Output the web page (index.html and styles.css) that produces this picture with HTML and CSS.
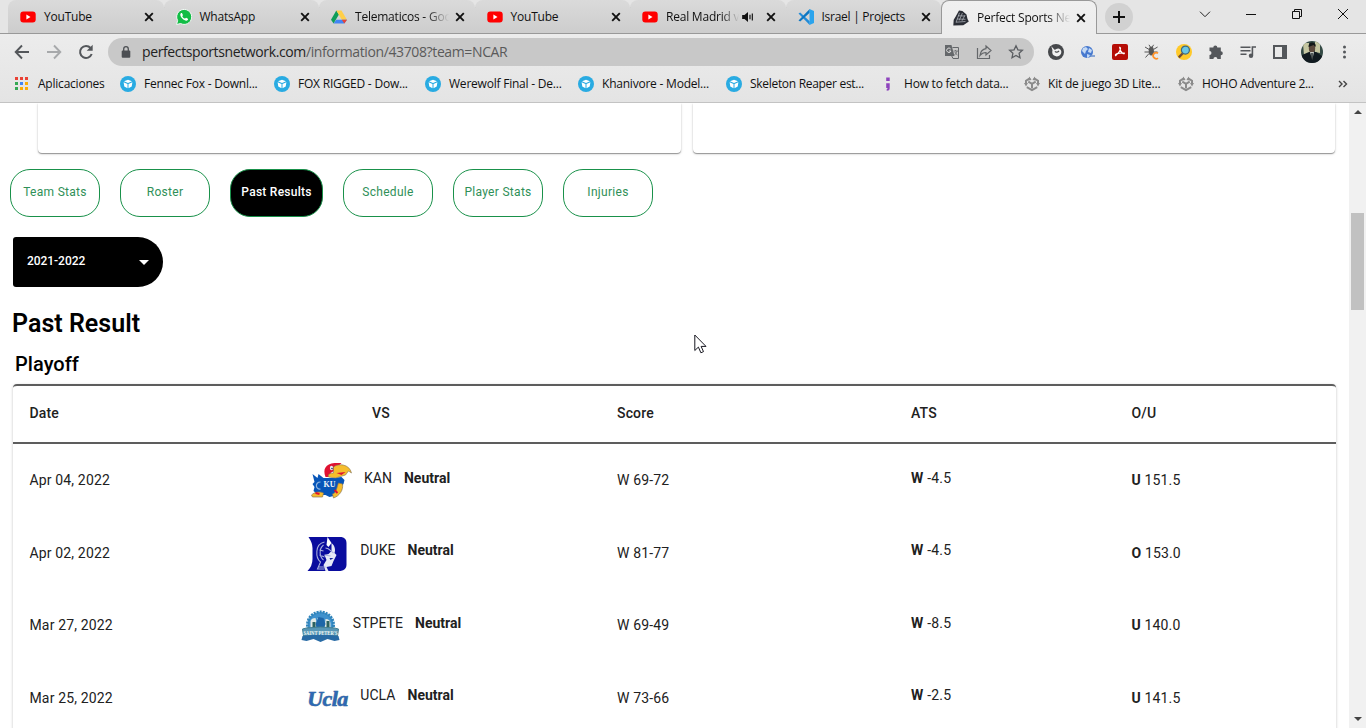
FILE: index.html
```html
<!DOCTYPE html>
<html lang="es">
<head>
<meta charset="utf-8">
<title>Perfect Sports Network</title>
<link rel="stylesheet" href="styles.css">
</head>
<body>
<svg class="defs" aria-hidden="true">
  <defs>
    <symbol id="yt" viewBox="0 0 16 16"><rect x="0.3" y="2.4" width="15.4" height="11.2" rx="3" fill="#f00"/><path d="M6.4 5.6v4.8L10.5 8z" fill="#fff"/></symbol>
    <symbol id="x" viewBox="0 0 10 10"><path d="M1.2 1.2l7.6 7.6M8.8 1.2L1.2 8.8" stroke="#111" stroke-width="1.9"/></symbol>
    <symbol id="cube" viewBox="0 0 16 16"><circle cx="8" cy="8" r="8" fill="#29abe2"/><path d="M8 3.7l4 1.5-4 1.8-4-1.8zM3.6 6.2l3.9 1.9v4.1L4.3 10.6zM12.4 6.2L8.5 8.1v4.1l3.2-1.6z" fill="#fff"/></symbol>
    <symbol id="unity" viewBox="0 0 16 16"><path d="M6.2 2.2L2 4.7v3.6M9.8 2.2L14 4.7v3.6M2.8 11.2L8 14.2l5.2-3M4.3 5.7L8 7.8l3.7-2.1M8 7.8v4.4" fill="none" stroke="#8b8b8b" stroke-width="2"/><path d="M0 7h4L2 10.4zM12 7h4l-2 3.4zM5.2.6L7.6 4 4.4 4.4zM10.8.6L8.4 4l3.2.4z" fill="#8b8b8b"/></symbol>
  </defs>
</svg>

<header class="browser">
  <div class="strip">
    <div class="tabs">
      <div class="tab"><svg class="fav"><use href="#yt"/></svg><span class="title">YouTube</span><svg class="close"><use href="#x"/></svg></div>
      <div class="tab"><svg class="fav" viewBox="0 0 16 16"><path d="M.6 15.5l1-4A7.5 7.5 0 1 1 4.6 14.5z" fill="#12bd46" stroke="#f7f7f7"/><path d="M5.1 4.1c-1.5.9-.9 3.4 1.2 5.5s4.7 2.8 5.6 1.2c.4-.8.2-1.1-.4-1.4l-1.4-.7c-.5-.1-.8 1-1.2.9-1.1-.4-2.2-1.4-2.6-2.4-.1-.4.8-.7.6-1.2l-.7-1.6c-.2-.4-.7-.5-1.1-.3z" fill="#fff"/></svg><span class="title">WhatsApp</span><svg class="close"><use href="#x"/></svg></div>
      <div class="tab"><svg class="fav" viewBox="0 0 16 16"><path d="M5.3 1.5L0 10.7l2.6 3.9 5.3-9z" fill="#0f9d58"/><path d="M5.3 1.5h5.2l5.4 9.2h-5.1z" fill="#ffcf48"/><path d="M5.2 10.7H16l-2.7 3.9H2.6z" fill="#4285f4"/><path d="M10.8 10.7H16l-2.7 3.9z" fill="#ea4335"/></svg><span class="title fade">Telematicos - Goo</span><svg class="close"><use href="#x"/></svg></div>
      <div class="tab"><svg class="fav"><use href="#yt"/></svg><span class="title">YouTube</span><svg class="close"><use href="#x"/></svg></div>
      <div class="tab"><svg class="fav"><use href="#yt"/></svg><span class="title fade short">Real Madrid v</span><svg class="sound" viewBox="0 0 12 12"><path d="M1 4.2h2L6 1.8v8.4L3 7.8H1z" fill="#111"/><path d="M7.7 4v4M9.7 3v6" stroke="#111"/></svg><svg class="close"><use href="#x"/></svg></div>
      <div class="tab last"><svg class="fav" viewBox="0 0 16 16"><path d="M.5 4.6l1.7-1.2 9.5 8.8V16z" fill="#218bd8"/><path d="M.5 11.4l1.7 1.2 9.5-8.8V0z" fill="#0c76c2"/><path d="M11.5 0L16 2v12l-4.5 2z" fill="#2ba4ed"/></svg><span class="title">Israel | Projects</span><svg class="close"><use href="#x"/></svg></div>
      <div class="tab active"><svg class="fav" viewBox="0 0 16 16"><path d="M6 .6l3.4.4 4.1 3.5 1 4.5 1.3 2.4-5.5 3.8L.3 15.4l.4-5.6 2-3.4z" fill="#2b2e36"/><path d="M6.5 2.8L3 12.4M9.4 3L6.2 10.5M12 5.2l-3 5.6M5 5.8l7 .2M4 9l8.5.3M3 12.2l9.5-.7" stroke="#b9bdc4" stroke-width=".7" fill="none"/></svg><span class="title fade">Perfect Sports Ne</span><svg class="close"><use href="#x"/></svg></div>
    </div>
    <div class="plus"><svg viewBox="0 0 12 12"><path d="M6 0v12M0 6h12" stroke="#111" stroke-width="2"/></svg></div>
    <div class="window">
      <svg viewBox="0 0 12 12"><path d="M1 3.7l5 5 5-5" fill="none" stroke="#222"/></svg>
      <svg viewBox="0 0 12 12"><path d="M1 6.5h10" stroke="#111"/></svg>
      <svg viewBox="0 0 12 12"><path d="M1.5 3.5h7v7h-7zM3.5 3V1.5h7v7H9" fill="none" stroke="#111"/></svg>
      <svg viewBox="0 0 12 12"><path d="M1 1l10 10M11 1L1 11" stroke="#111"/></svg>
    </div>
  </div>

  <div class="toolbar">
    <div class="nav">
      <svg viewBox="0 0 16 16"><path d="M15 8H2M8 1.5L1.7 8 8 14.5" fill="none" stroke="#54575b" stroke-width="1.9"/></svg>
      <svg viewBox="0 0 16 16"><path d="M1 8h13M8 1.5L14.3 8 8 14.5" fill="none" stroke="#a7a9ab" stroke-width="1.9"/></svg>
      <svg viewBox="0 0 16 16"><path d="M13.7 10A6 6 0 1 1 12.6 4" fill="none" stroke="#54575b" stroke-width="2"/><path d="M14.7.8v6H8.7z" fill="#54575b"/></svg>
    </div>
    <div class="address">
      <svg class="lock" viewBox="0 0 10 12"><rect x=".7" y="4.5" width="8.6" height="7.2" rx="1" fill="#4c4f53"/><path d="M2.7 5V3a2.3 2.3 0 0 1 4.6 0v2" fill="none" stroke="#4c4f53" stroke-width="1.3"/></svg>
      <span class="url"><b>perfectsportsnetwork.com</b>/information/43708?team=NCAR</span>
      <div class="page-tools">
        <svg viewBox="0 0 16 16"><path d="M1 1h6.5l3 11H1z" fill="#64676a"/><path d="M8.5 3.5h6v11H9l-1.5-3" fill="none" stroke="#64676a"/><path d="M6.7 5A2.2 2.2 0 1 0 7 7H5" fill="none" stroke="#ddd"/><path d="M9.5 7H14M11.5 6v1M13 7c-.5 2-1.5 3-2.5 4M10.8 8l2.6 3.3" fill="none" stroke="#64676a" stroke-width=".8"/></svg>
        <svg viewBox="0 0 16 16"><path d="M1.5 4v10.5h12V11" fill="none" stroke="#64676a" stroke-width="1.2"/><path d="M10 2l5 4.5-5 4.4V8.5c-3 0-4.4.9-6 3 .5-4 2.5-6.3 6-6.8z" fill="none" stroke="#64676a" stroke-width="1.2"/></svg>
        <svg viewBox="0 0 16 16"><path d="M8 1.7l1.9 4.1 4.5.5-3.3 3 .9 4.5L8 11.5l-4 2.3.9-4.5-3.3-3 4.5-.5z" fill="none" stroke="#5b5e62" stroke-width="1.3"/></svg>
      </div>
    </div>
    <div class="extensions">
      <svg viewBox="0 0 16 16"><circle cx="8" cy="8" r="8" fill="#46484b"/><path d="M3.3 2.2l3 3.4c1.2.9 2.2-1.2 4-1 2.7.3 3.7 3 2.7 5.2-1.2 2.5-4.6 3.4-7 1.8-2-1.3-2-3.4-1.5-5z" fill="#f0f0f0"/><path d="M7 7.3c1 1.4 3 1 4-.5" stroke="#46484b" stroke-width="1.2" fill="none"/></svg>
      <svg viewBox="0 0 16 16"><circle cx="7" cy="8" r="6" fill="#4779cf"/><path d="M3 4l3-1 2 2-2 2-1 3-3-3zM9 4l3 2-1 3-3-1zM7 10l3 1-1 2-2 1z" fill="#c4d9f4"/><path d="M10 12h5" stroke="#688fcc" stroke-width="1.5"/></svg>
      <svg viewBox="0 0 16 16"><rect width="16" height="16" rx="2" fill="#b50d06"/><path d="M7.6 3.3c2 0 .8 4.1-3.8 8.4-2.2-1.3 3.5-3.3 8.5-2.7.7 2.2-4.4-.3-4.7-5.7z" fill="none" stroke="#fff" stroke-width="1.1"/></svg>
      <svg viewBox="0 0 16 16"><ellipse cx="7.3" cy="7" rx="2.6" ry="4.6" fill="#575757"/><path d="M5 .8L6.3 3M9.6.8L8.3 3M1 3l4 2.4M13.6 3l-4 2.4M.5 8h13M1.5 13.5L5 9.5" stroke="#575757"/><path d="M14 9.3a3 3 0 1 0 0 4.8" fill="none" stroke="#ff932b" stroke-width="1.8"/></svg>
      <svg viewBox="0 0 16 16"><circle cx="8" cy="8" r="8" fill="#ffc929"/><path d="M6.8 9.2l-4 4.2" stroke="#704b37" stroke-width="2.3"/><circle cx="9.4" cy="6.1" r="4" fill="#6ac7e5" stroke="#3f687d" stroke-width="1.2"/></svg>
      <svg viewBox="0 0 16 16"><path d="M1.5 3.6h3.8a2 2 0 1 1 4 0h3.5v3.6a2 2 0 1 1 0 4V15H9.4a2 2 0 0 0-4 0H1.5v-4a2 2 0 0 0 0-4z" fill="#54575b"/></svg>
      <svg viewBox="0 0 16 16"><path d="M.5 3.3h10M.5 6.8h10M.5 10.3h6M12.4 11.5V3H16" fill="none" stroke="#54575b" stroke-width="1.6"/><circle cx="11" cy="11.8" r="2.2" fill="#54575b"/></svg>
      <svg viewBox="0 0 16 16"><path d="M1 1h14v14H1zM3 3v10h7V3z" fill="#54575b" fill-rule="evenodd"/></svg>
      <svg class="avatar" viewBox="0 0 22 22"><defs><clipPath id="portrait"><circle cx="11" cy="11" r="11"/></clipPath></defs><g clip-path="url(#portrait)"><path fill="#344a45" d="M0 0h22v22H0z"/><path fill="#c6c7a2" d="M2 2h6l1 10-6 3zM14 0h5v12l-5-1z"/><path fill="#111a20" d="M1 22V14l7-3h7l6 4v7z"/><ellipse cx="11" cy="7" rx="3.2" ry="4.6" fill="#5c493d"/><path d="M7.5 6q0-5 4-4.5t3 4.5l-2-2z" fill="#131819"/><path fill="#c7cbc6" d="M9 11h4l-1.8 8z"/><path d="M11 12v7" stroke="#151c20" stroke-width="1.3"/></g></svg>
      <svg viewBox="0 0 16 16"><g fill="#54575b"><circle cx="8.5" cy="3" r="1.5"/><circle cx="8.5" cy="8" r="1.5"/><circle cx="8.5" cy="13" r="1.5"/></g></svg>
    </div>
  </div>

  <nav class="bookmarks">
    <a><svg viewBox="0 0 16 16"><g fill="#e94235"><path d="M1 1h3v3H1zM6 1h3v3H6zM11 1h3v3h-3z"/></g><path fill="#34a853" d="M1 6h3v3H1zM1 11h3v3H1z"/><path fill="#4285f4" d="M6 6h3v3H6z"/><path fill="#fbac05" d="M11 6h3v3h-3zM6 11h3v3H6zM11 11h3v3h-3z"/></svg><span>Aplicaciones</span></a>
    <a><svg><use href="#cube"/></svg><span>Fennec Fox - Downl...</span></a>
    <a><svg><use href="#cube"/></svg><span>FOX RIGGED - Dow...</span></a>
    <a><svg><use href="#cube"/></svg><span>Werewolf Final - De...</span></a>
    <a><svg><use href="#cube"/></svg><span>Khanivore - Model...</span></a>
    <a><svg><use href="#cube"/></svg><span class="tight">Skeleton Reaper est...</span></a>
    <a><svg viewBox="0 0 16 16"><path d="M6.2 1.5h3.5V5H6.2zM6.2 7.2h3.5v5c0 1.7-.8 2.5-3 2.5v-1.6c.7-.2.8-.5.8-1.2H6.2z" fill="#8e44bd"/></svg><span>How to fetch data...</span></a>
    <a><svg><use href="#unity"/></svg><span>Kit de juego 3D Lite...</span></a>
    <a><svg><use href="#unity"/></svg><span class="tight">HOHO Adventure 2...</span></a>
    <svg class="more" viewBox="0 0 10 8"><path d="M1 1l3 3-3 3M5.5 1l3 3-3 3" fill="none" stroke="#444" stroke-width="1.4"/></svg>
  </nav>
</header>

<div class="viewport">
  <main class="page">
    <div class="cards"><section></section><section></section></div>
    <div class="pills">
      <button>Team Stats</button><button>Roster</button><button class="selected">Past Results</button><button>Schedule</button><button>Player Stats</button><button>Injuries</button>
    </div>
    <div class="season"><span>2021-2022</span><i></i></div>
    <h1>Past Result</h1>
    <h2>Playoff</h2>
    <div class="table">
      <div class="row head"><span>Date</span><span class="vs">VS</span><span class="score">Score</span><span>ATS</span><span>O/U</span></div>
      <div class="row"><span>Apr 04, 2022</span>
        <span class="vs"><svg viewBox="0 0 40 40"><path d="M1 23l2-2-2-8 5 4 1-4 5 4h9l9-1 3 3-1 4-3 3 1 3-4 5-8 2-4-2-7 0-5-4 1-4z" fill="#0755b8"/><path d="M14 16c-3-8 0-13 9-14h7l-3 3-3 4-5 3 2 4z" fill="#df1231"/><path d="M22 6c5-4 16-3 18 6l-3-2-3 4-10 3-7-1c-1-3 2-4 5-4z" fill="#f6bd2c" stroke="#81745a" stroke-width=".6"/><path d="M25 12l9-1-4 3z" fill="#df1231"/><path d="M27 22l4 1c1 6-3 12-9 14l-1-4c4-1 4-6 6-11zM0 34c3-3 8-4 12-2l-1 4H1z" fill="#f6bd2c" stroke="#8a7756" stroke-width=".7"/><path d="M23 29l3 3M4 32l4 1" stroke="#df1231" fill="none" stroke-width="2"/><path d="M9 21c-6 0-5 8 0 7" fill="none" stroke="#8fb4de" stroke-width="1.2"/><text x="12" y="26" class="ku">KU</text><ellipse cx="20" cy="7" rx="1.6" ry="2.3" fill="#e8eff5"/><circle cx="20.5" cy="7.5" r=".8" fill="#1c375f"/></svg><em>KAN</em><b>Neutral</b></span>
        <span class="score">W 69-72</span><span class="ats"><b>W</b> -4.5</span><span><b>U</b> 151.5</span></div>
      <div class="row"><span>Apr 02, 2022</span>
        <span class="vs"><svg viewBox="0 0 40 40"><path d="M1 3h33q5 1 5 6v22q0 5-6 6H0q5-5 5-12V14Q5 9 1 3z" fill="#0a0c9e"/><path d="M20 3l4 6-3 4-2-2z" fill="#fff"/><path d="M24 9c4 3 4 8 3 10l2 2-3 6-2 5-5 1 2 4h-3l-2-6 3-5-2-5 4-1 3-3z" fill="#e7e9f6"/><path d="M17 8C7 10 8 24 13 28l-3 7h7M16 11c-5 4-4 12 0 15M18 14c4 0 5 3 8 5M11 33h7M12 16l4 1M12 21l5 2M17 21l6 1" fill="none" stroke="#aab0dc" stroke-width="1.1"/><path d="M22 24l4 0-3 2z" fill="#17259a"/></svg><em>DUKE</em><b>Neutral</b></span>
        <span class="score">W 81-77</span><span class="ats"><b>W</b> -4.5</span><span><b>O</b> 153.0</span></div>
      <div class="row"><span>Mar 27, 2022</span>
        <span class="vs"><svg viewBox="0 0 40 40"><circle cx="20" cy="19" r="13" fill="#3f91cd" stroke="#2f84bb" stroke-width="3" stroke-dasharray="2 1"/><path d="M10 22v-7q1-3 5-3l1 4-1 6zM25 13q5 0 5 5v5l-6-1zM17 12h4v7l-4-2z" fill="#e2eae5"/><path d="M18 11l5 1 2 6-2 5h-6l-2-5z" fill="#1e66a8"/><path d="M12 16h3v6h-3zM26 15h3v7h-3z" fill="#2c6260"/><path d="M2 23l4-1q14-2 28 0l4 1-1 7H3z" fill="#5796b6" stroke="#447f91"/><path d="M2 30q18-3 36 0l1 4-5 1-7-2-7 3-7-3-7 2-5-1z" fill="#286ba5"/><text x="3" y="29" class="peters" textLength="34" lengthAdjust="spacingAndGlyphs">SAINT PETER'S</text></svg><em>STPETE</em><b>Neutral</b></span>
        <span class="score">W 69-49</span><span class="ats"><b>W</b> -8.5</span><span><b>U</b> 140.0</span></div>
      <div class="row"><span>Mar 25, 2022</span>
        <span class="vs"><span class="ucla">Ucla</span><em>UCLA</em><b>Neutral</b></span>
        <span class="score">W 73-66</span><span class="ats"><b>W</b> -2.5</span><span><b>U</b> 141.5</span></div>
    </div>
  </main>
  <aside class="scrollbar"><i class="up"></i><div class="thumb"></div><i class="down"></i></aside>
</div>
<svg class="cursor" viewBox="0 0 13 20"><path d="M.8 1v15.5l3.6-3.4 2.5 5.7 2.6-1.2-2.4-5.2H12z" fill="#fff" stroke="#171720"/></svg>
</body>
</html>
```

FILE: styles.css
```css
* { box-sizing: border-box; }
body { margin: 0; width: 1366px; height: 728px; overflow: hidden; background: #fff; font-family: Roboto, sans-serif; }
svg { display: block; flex: none; }
.defs { position: absolute; width: 0; height: 0; }

.browser { height: 103px; border-bottom: 1px solid #c3c3c3; background: linear-gradient(#e5e5e5 0, #e5e5e5 33px, #ececec 34px, #e4e4e4); font-family: "Open Sans", sans-serif; font-size: 12px; color: #111; }
.strip { height: 34px; display: flex; border-bottom: 1px solid #999; }
.tabs { display: flex; padding-left: 8px; width: 1097px; }
.tab { position: relative; width: 155.5px; flex: none; height: 33px; padding-left: 12px; display: flex; align-items: center; background: linear-gradient(#dadada, #cdcdcd); border-radius: 8px 8px 0 0; }
.tab::after { content: ""; position: absolute; right: -1px; top: 7px; width: 1px; height: 20px; background: #858585; }
.tab.last::after, .tab.active::after { display: none; }
.tab.active { width: 156px; height: 34px; padding-left: 11px; background: linear-gradient(#f0f0f0, #ececec); border: 1px solid #999; border-bottom: 0; }
.fav { width: 16px; height: 16px; margin-right: 8px; }
.title { width: 100px; height: 18px; line-height: 18px; white-space: nowrap; letter-spacing: -.22px; }
.fade { width: 94px; margin-right: 6px; -webkit-mask-image: linear-gradient(90deg, #000 76%, transparent); mask-image: linear-gradient(90deg, #000 76%, transparent); }
.last .title { width: 99px; letter-spacing: -.27px; }
.active .title { width: 93px; }
.fade.short { width: 73px; margin-right: 2px; }
.sound { width: 14px; height: 14px; margin-right: 11px; }
.close { width: 10px; height: 10px; }
.plus { width: 28px; height: 28px; margin: 3px 0 0 8px; border-radius: 50%; background: #d1d1d1; display: flex; align-items: center; justify-content: center; }
.plus svg { width: 12px; height: 12px; }
.window { display: flex; gap: 34px; margin: 8px 0 0 66px; }
.window svg { width: 12px; height: 12px; }

.toolbar { height: 36px; display: flex; align-items: center; }
.nav { width: 108px; padding-left: 14px; display: flex; gap: 16px; }
.nav svg { width: 16px; height: 16px; }
.address { width: 926px; height: 28px; border-radius: 14px; background: #c8c8c8; display: flex; align-items: center; padding: 0 10px 0 13px; }
.lock { width: 10px; height: 12px; margin-right: 11px; }
.url { flex: 1; font-size: 14px; letter-spacing: -.38px; color: #5a5a5a; white-space: nowrap; line-height: 20px; }
.url b { font-weight: 400; color: #222; }
.page-tools { display: flex; gap: 16px; }
.page-tools svg { width: 16px; height: 16px; }
.extensions { display: flex; gap: 16px; padding-left: 14px; align-items: center; }
.extensions svg { width: 16px; height: 16px; }
.extensions .avatar { width: 22px; height: 22px; margin: 0 -3px; }

.bookmarks { height: 28px; display: grid; grid-template-columns: 106px 154px 151px 153px 148px 154px 144px 154px 160px 12px; align-items: center; padding-left: 14px; }
.bookmarks a { display: flex; align-items: center; gap: 8px; white-space: nowrap; letter-spacing: -.22px; line-height: 18px; }
.bookmarks a svg { width: 16px; height: 16px; }
.bookmarks .tight { letter-spacing: -.3px; }
.bookmarks .more { width: 10px; height: 8px; }

.viewport { height: 625px; display: flex; }
.page { width: 1349px; height: 625px; overflow: hidden; }
.cards { height: 51px; display: grid; grid-template-columns: 643px 642px; gap: 12px; padding-left: 38px; }
.cards section { height: 50px; border-radius: 0 0 4px 4px; box-shadow: 0 1px 1px rgba(0,0,0,.35), 0 1px 3px rgba(0,0,0,.15); }
.pills { display: flex; gap: 20px; padding: 15px 0 0 10px; }
.pills button { width: 90px; height: 48px; padding: 0 0 2px; border: 1px solid #19914a; border-radius: 20px; background: #fff; color: #2f9058; font: 400 12px/20px Roboto, sans-serif; letter-spacing: .3px; white-space: nowrap; }
.pills .selected { width: 93px; background: #000; color: #fff; font-weight: 500; letter-spacing: .25px; }
.season { width: 150px; height: 50px; margin: 20px 0 0 13px; padding: 0 14px 2px; background: #000; color: #fff; border-radius: 3px 25px 25px 3px; display: flex; align-items: center; justify-content: space-between; font-size: 12px; font-weight: 500; letter-spacing: -.05px; }
.season i { border: 5px solid transparent; border-top-color: #fff; border-bottom: 0; margin-top: 3px; }
h1 { font-size: 25px; line-height: 32px; font-weight: 600; margin: 21px 0 0 12px; letter-spacing: .03px; }
h2 { font-size: 20px; line-height: 24px; font-weight: 500; margin: 12px 0 8px 15px; letter-spacing: .05px; }
.table { width: 1323px; height: 360px; margin-left: 13px; border-top: 2px solid #5d5d5d; border-radius: 4px 4px 0 0; box-shadow: 0 1px 3px rgba(0,0,0,.25); color: #212121; font-size: 14px; letter-spacing: .15px; }
.row { height: 72.6px; display: grid; grid-template-columns: 216px 272px 393.5px 220.5px 204px; align-items: center; padding-left: 16.5px; }
.row > .score { padding-left: 99.5px; }
.head { height: 58px; border-bottom: 2px solid #5d5d5d; font-weight: 500; padding-bottom: 2px; }
.vs { display: flex; align-items: center; justify-content: center; }
.head .vs { padding-right: 1px; }
.row:not(.head) > .vs { padding: 0 2px 5.4px 0; }
.vs svg { width: 41px; height: 40px; margin: 7px 12px 0 0; }
.vs em { font-style: normal; margin-right: 12px; letter-spacing: .05px; }
.vs b { letter-spacing: 0; }
.row > .ats { padding-bottom: 5.4px; letter-spacing: .22px; }
.row b { font-weight: 700; }
.ucla { width: 41px; height: 32px; margin: 8px 12px 0 0; font: italic 700 22px/32px "Liberation Serif", serif; letter-spacing: -.6px; color: #2e69b5; -webkit-text-stroke: .5px #2e69b5; text-shadow: 0 0 1px #b9a868; white-space: nowrap; }
.peters { font: 700 7px "Liberation Serif", serif; fill: #f0f8f5; letter-spacing: 0; }
.ku { font: 700 8px "Liberation Serif", serif; fill: #f0f5fa; letter-spacing: 0; }

.scrollbar { width: 17px; background: #f1f1f1; display: flex; flex-direction: column; align-items: center; }
.scrollbar i { border: 4px solid transparent; }
.scrollbar .up { margin-top: 7px; border-top: 0; border-bottom-color: #444; }
.thumb { width: 13px; height: 97px; background: #c1c1c1; margin-top: 99px; }
.scrollbar .down { margin-top: auto; margin-bottom: 7px; border-bottom: 0; border-top-color: #444; }
.cursor { position: absolute; left: 694px; top: 334px; width: 13px; height: 20px; }
```
